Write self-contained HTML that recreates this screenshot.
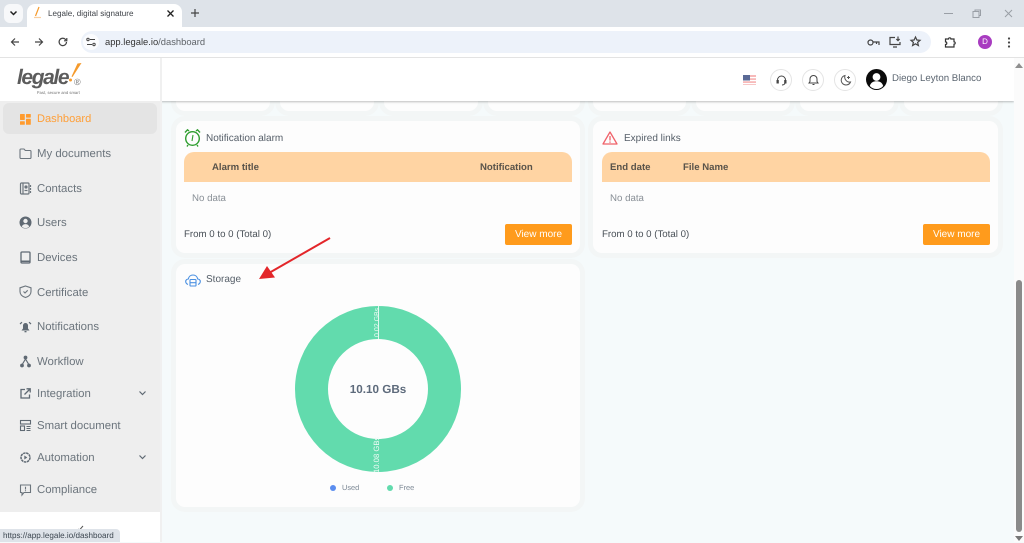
<!DOCTYPE html>
<html><head><meta charset="utf-8"><title>Legale, digital signature</title>
<style>
html,body{margin:0;padding:0;width:1024px;height:542px;overflow:hidden;background:#f5fafb;font-family:"Liberation Sans",sans-serif;text-rendering:geometricPrecision}
div,span{position:absolute;white-space:nowrap;box-sizing:border-box}
svg{position:absolute;overflow:visible}
.m{left:37px;font-size:11.4px;color:#6c757d;line-height:14px}
.i{left:19px;width:13px;height:13px}
.card{background:#fdfdfd;border-radius:9px;box-shadow:0 0 0 5px #f3f6f6}
.stub{top:90px;height:21px;background:#fdfdfd;border-radius:0 0 9px 9px;box-shadow:0 0 0 5px #f3f6f6}
.t{font-size:10px;color:#555e68;line-height:14px}
.th{top:152px;height:30px;background:#ffd4a3;border-radius:10px 10px 0 0}
.h{font-size:9.6px;font-weight:bold;color:#59534a;top:161px;line-height:13px}
.nd{top:192px;font-size:9.7px;color:#888f96;line-height:14px}
.fr{top:228px;font-size:9.7px;color:#495057;line-height:14px}
.btn{top:224px;width:67px;height:21px;background:#ff9b1c;border-radius:2px;color:#fff;font-size:10px;text-align:center;line-height:21px}
.hb{top:69px;width:22px;height:22px;border:1px solid #e4e4e4;border-radius:50%;background:#fff}
</style></head><body>

<!-- page -->
<div style="left:161px;top:57px;width:853px;height:485px;background:#f5fafb"></div>

<div class="stub" style="left:176px;width:94px"></div>
<div class="stub" style="left:280px;width:94px"></div>
<div class="stub" style="left:384px;width:94px"></div>
<div class="stub" style="left:488px;width:92px"></div>
<div class="stub" style="left:593px;width:93px"></div>
<div class="stub" style="left:696px;width:94px"></div>
<div class="stub" style="left:800px;width:94px"></div>
<div class="stub" style="left:904px;width:94px"></div>

<!-- header -->
<div style="left:161px;top:58px;width:853px;height:43px;background:#fff;box-shadow:0 1px 2px rgba(0,0,0,.25)"></div>
<svg style="left:743px;top:75px" width="13" height="10" viewBox="0 0 13 10"><rect width="13" height="10" fill="#f7b9b9"/><rect y="2" width="13" height="1.2" fill="#fff"/><rect y="5" width="13" height="1.2" fill="#fff"/><rect y="8" width="13" height="1.2" fill="#fff"/><rect width="7" height="5.5" fill="#5a6a96"/></svg>
<div class="hb" style="left:770px"></div>
<svg style="left:776px;top:75px" width="11" height="11" viewBox="0 0 11 11" fill="none" stroke="#444" stroke-width="1"><path d="M1.500 7V5a4 4 0 0 1 8 0v2"/><path d="M1 5.500h1.300v2.500H1zM8.700 5.500H10v2.500H8.700z" fill="#444"/><path d="M9 8.500Q8 10 6 10"/></svg>
<div class="hb" style="left:802px"></div>
<svg style="left:808px;top:74px" width="11" height="12" viewBox="0 0 11 12" fill="none" stroke="#444" stroke-width="1"><path d="M1 9h9L9 7.500V5a3.500 3.500 0 0 0-7 0v2.500z"/><path d="M4.500 10.500h2"/></svg>
<div class="hb" style="left:834px"></div>
<svg style="left:840px;top:74px" width="12" height="12" viewBox="0 0 12 12" fill="none" stroke="#555" stroke-width="1"><path d="M5 1.500a4.800 4.800 0 1 0 5.500 6.500A5 5 0 0 1 5 1.500z"/><path d="M8.500 2v3M7 3.500h3"/></svg>
<svg style="left:866px;top:69px" width="21" height="21" viewBox="0 0 21 21"><circle cx="10.500" cy="10.500" r="10.500" fill="#0b0b0b"/><circle cx="10.500" cy="8" r="3.900" fill="#fff"/><path d="M3.800 17c1-3.800 3.700-4.800 6.700-4.800s5.700 1 6.700 4.800a9 9 0 0 1-13.400 0z" fill="#fff"/></svg>
<div style="left:892px;top:72px;font-size:9.700px;color:#5b6570;line-height:14px">Diego Leyton Blanco</div>

<!-- sidebar -->
<div style="left:0;top:58px;width:160px;height:43px;background:#fff"></div>
<div style="left:0;top:101px;width:160px;height:411px;background:#eee"></div>
<div style="left:160px;top:58px;width:2px;height:484px;background:#f0f0f0"></div>
<div style="left:0;top:512px;width:160px;height:30px;background:#fff"></div>
<div style="left:3px;top:103px;width:154px;height:31px;background:#e4e4e4;border-radius:6px"></div>

<!-- logo -->
<div style="left:17px;top:66px;font-style:italic;font-weight:bold;font-size:21px;color:#5c5c5c;line-height:24px;letter-spacing:-1.4px">legale</div>
<svg style="left:68px;top:62px" width="14" height="22" viewBox="0 0 14 22"><path d="M13.500 1L4.500 15 3.500 14.500 9.500 1.500z" fill="#f59a2c"/><circle cx="2.500" cy="18" r="1.500" fill="#f59a2c"/></svg>
<div style="left:74px;top:77px;font-size:9px;color:#777;line-height:10px">®</div>
<div style="left:37px;top:90px;font-size:4.200px;color:#777;line-height:5px">Fast, secure and smart</div>

<!-- menu -->
<svg class="i" style="top:113px" viewBox="0 0 13 13" fill="#ff9b2e"><rect x="1" y="1" width="4.800" height="6" rx=".6"/><rect x="7" y="1" width="4.800" height="3.600" rx=".6"/><rect x="1" y="8.200" width="4.800" height="3.600" rx=".6"/><rect x="7" y="5.800" width="4.800" height="6" rx=".6"/></svg>
<div class="m" style="top:112px;color:#ff9f38;font-size:11.100px">Dashboard</div>

<svg class="i" style="top:147px" viewBox="0 0 13 13" fill="none" stroke="#6c757d" stroke-width="1.100"><path d="M1 3a1 1 0 0 1 1-1h3l1.300 1.500H11a1 1 0 0 1 1 1V10.500a1 1 0 0 1-1 1H2a1 1 0 0 1-1-1z"/></svg>
<div class="m" style="top:147px">My documents</div>

<svg class="i" style="top:182px" viewBox="0 0 13 13" fill="none" stroke="#6c757d" stroke-width="1.200"><rect x="1.500" y="1" width="8.500" height="11" rx="1"/><path d="M4 1v11M11.500 3v2M11.500 6v2M11.500 9v2"/><circle cx="7" cy="5" r="1" fill="#6c757d"/><path d="M5.500 8.500h3" /></svg>
<div class="m" style="top:182px">Contacts</div>

<svg class="i" style="top:216px" viewBox="0 0 13 13"><circle cx="6.500" cy="6.500" r="6" fill="#5f6973"/><circle cx="6.500" cy="5" r="2.200" fill="#eee"/><path d="M2.800 10.500c.8-1.800 2.200-2.400 3.700-2.400s2.900.6 3.700 2.400a5 5 0 0 1-7.400 0z" fill="#eee"/></svg>
<div class="m" style="top:216px">Users</div>

<svg class="i" style="top:251px" viewBox="0 0 13 13" fill="none" stroke="#5f6973" stroke-width="1.300"><rect x="2" y="1" width="9" height="11" rx="1"/><path d="M2 10.300h9" stroke-width="1.600"/></svg>
<div class="m" style="top:251px">Devices</div>

<svg class="i" style="top:285px" viewBox="0 0 13 13" fill="none" stroke="#6c757d" stroke-width="1.100"><path d="M6.500 1L12 2.800V6.500c0 3-2.300 5-5.500 6C3.300 11.500 1 9.500 1 6.500V2.800z"/><path d="M4.500 6.500l1.500 1.500 2.700-2.700"/></svg>
<div class="m" style="top:286px">Certificate</div>

<svg class="i" style="top:320px" viewBox="0 0 13 13" fill="#5f6973"><path d="M2.500 10.500L4 8.500V5.500a2.500 2.500 0 0 1 5 0v3l1.500 2z"/><rect x="5.500" y="11" width="2" height="1.300"/><path d="M1 4L3 2.200M12 4L10 2.200" stroke="#5f6973" stroke-width="1.200"/></svg>
<div class="m" style="top:320px">Notifications</div>

<svg class="i" style="top:355px" viewBox="0 0 13 13" fill="none" stroke="#5f6973" stroke-width="1.200"><circle cx="6.500" cy="2.500" r="1.300" fill="#5f6973"/><circle cx="3" cy="10.500" r="1.300" fill="#5f6973"/><circle cx="10" cy="10.500" r="1.300" fill="#5f6973"/><path d="M6.500 4L3.500 9M6.500 4l3 5"/></svg>
<div class="m" style="top:355px">Workflow</div>

<svg class="i" style="top:387px" viewBox="0 0 13 13" fill="none" stroke="#5f6973" stroke-width="1.300"><path d="M6 2.500H2v8.500h8.500V7.500"/><path d="M5.500 7.500L11 2M7.500 1.800H11.200V5.500"/></svg>
<div class="m" style="top:387px">Integration</div>
<svg style="left:138px;top:390px" width="9" height="6" viewBox="0 0 9 6" fill="none" stroke="#5f6973" stroke-width="1.200"><path d="M1.500 1.500l3 3 3-3"/></svg>

<svg class="i" style="top:419px" viewBox="0 0 13 13" fill="none" stroke="#5f6973" stroke-width="1.100"><rect x="1.500" y="1.500" width="10" height="3.500"/><rect x="1.500" y="7" width="4" height="4.500"/><path d="M7.500 7.500h4M7.500 9.500h4M7.500 11.500h4"/></svg>
<div class="m" style="top:419px">Smart document</div>

<svg class="i" style="top:451px" viewBox="0 0 13 13" fill="none" stroke="#5f6973" stroke-width="1.500"><circle cx="6.500" cy="6.500" r="4.500" stroke-dasharray="2.500 .6"/><path d="M5.300 4.500l3 2-3 2z" fill="#5f6973" stroke="none"/></svg>
<div class="m" style="top:451px">Automation</div>
<svg style="left:138px;top:454px" width="9" height="6" viewBox="0 0 9 6" fill="none" stroke="#5f6973" stroke-width="1.200"><path d="M1.500 1.500l3 3 3-3"/></svg>

<svg class="i" style="top:483px" viewBox="0 0 13 13" fill="none" stroke="#6c757d" stroke-width="1.100"><path d="M1.500 2h10v7.500H5L3 12V9.500H1.500z"/><path d="M6.500 3.800v2.700M6.500 7.200v1"/></svg>
<div class="m" style="top:483px">Compliance</div>

<!-- Notification card -->
<div class="card" style="left:176px;top:121px;width:404px;height:132px"></div>
<svg style="left:184px;top:128px" width="17" height="19" viewBox="0 0 17 19" fill="none" stroke="#2f9e2f" stroke-width="1.400"><circle cx="8.500" cy="10.500" r="6.800"/><path d="M9 7l-1 6" stroke-width="1.100"/><path d="M1 4.500L3.500 1.800 5 3M16 4.500L13.500 1.800 12 3"/><path d="M4 17l-1 1.500M13 17l1 1.500"/></svg>
<div class="t" style="left:206px;top:132px">Notification alarm</div>
<div class="th" style="left:184px;width:388px"></div>
<div class="h" style="left:212px;top:161px">Alarm title</div>
<div class="h" style="left:480px;top:161px">Notification</div>
<div class="nd" style="left:192px">No data</div>
<div class="fr" style="left:184px">From 0 to 0 (Total 0)</div>
<div class="btn" style="left:505px">View more</div>

<!-- Expired card -->
<div class="card" style="left:593px;top:121px;width:405px;height:132px"></div>
<svg style="left:602px;top:131px" width="16" height="14" viewBox="0 0 16 14" fill="none" stroke="#f0626a" stroke-width="1.300"><path d="M8 1L15 13H1z" stroke-linejoin="round"/><path d="M8 5v4.500M8 10.500v1.200"/></svg>
<div class="t" style="left:624px;top:132px">Expired links</div>
<div class="th" style="left:602px;width:388px"></div>
<div class="h" style="left:610px">End date</div>
<div class="h" style="left:683px">File Name</div>
<div class="nd" style="left:610px">No data</div>
<div class="fr" style="left:602px">From 0 to 0 (Total 0)</div>
<div class="btn" style="left:923px">View more</div>

<!-- Storage card -->
<div class="card" style="left:176px;top:264px;width:404px;height:243px"></div>
<svg style="left:185px;top:273px" width="16" height="14" viewBox="0 0 16 14" fill="none" stroke="#4a90e2" stroke-width="1.100"><path d="M3 11.500C1.500 10.800.700 9.800.700 8.500.700 7 2 6 3.300 6 3.800 3.500 5.800 2 8 2s4.200 1.500 4.700 4C14 6 15.300 7 15.300 8.500c0 1.300-.8 2.300-2.300 3"/><rect x="5" y="6.500" width="6" height="6.500" rx=".8"/><path d="M5 9.700h6"/></svg>
<div class="t" style="left:206px;top:273px">Storage</div>

<svg style="left:295px;top:306px" width="166" height="166" viewBox="0 0 166 166"><circle cx="83" cy="83" r="66.500" fill="none" stroke="#62dbad" stroke-width="33"/><path d="M83.500 0v33" stroke="#fff" stroke-width=".8"/></svg>
<div style="left:378px;top:306px;width:0;height:0"><span style="left:-14px;top:13px;width:28px;text-align:center;transform:rotate(-90deg);font-size:7px;color:#ecfbf5;line-height:8px">0.02 GBs</span></div>
<div style="left:377px;top:455px;width:0;height:0"><span style="left:-18px;top:-4px;width:36px;text-align:center;transform:rotate(-90deg);font-size:7.700px;color:#f2fcf8;line-height:8px">10.08 GBs</span></div>
<div style="left:328px;top:382px;width:100px;text-align:center;font-size:11.700px;font-weight:bold;color:#5e6b7c;line-height:16px">10.10 GBs</div>
<div style="left:330px;top:485px;width:6px;height:6px;border-radius:50%;background:#5b8def"></div>
<div style="left:342px;top:483px;font-size:7.400px;color:#7b8794;line-height:10px">Used</div>
<div style="left:387px;top:485px;width:6px;height:6px;border-radius:50%;background:#62dbad"></div>
<div style="left:399px;top:483px;font-size:7.400px;color:#7b8794;line-height:10px">Free</div>

<!-- Arrow -->
<svg style="left:255px;top:235px" width="80" height="50" viewBox="0 0 80 50"><path d="M75 3L14 38" stroke="#e3262a" stroke-width="2"/><path d="M4 44L20 42.500 12 31z" fill="#e3262a"/></svg>

<!-- page scrollbar -->
<div style="left:1014px;top:58px;width:10px;height:484px;background:#fbfbfb"></div>
<svg style="left:1015px;top:62px" width="8" height="6"><path d="M4 1L8 6H0z" fill="#8f8f8f"/></svg>
<svg style="left:1015px;top:536px" width="8" height="5"><path d="M0 0h8L4 5z" fill="#777"/></svg>
<div style="left:1016px;top:280px;width:6px;height:252px;background:#8a8a8a;border-radius:3px"></div>

<!-- browser chrome -->
<div style="left:0;top:0;width:1024px;height:27px;background:#dee3e9"></div>
<div style="left:0;top:27px;width:1024px;height:31px;background:#fff;border-bottom:1px solid #e3e3e3"></div>
<div style="left:4px;top:4px;width:19px;height:19px;background:#f7f8fa;border-radius:6px"></div>
<svg style="left:9px;top:10px" width="9" height="7" viewBox="0 0 9 7" fill="none" stroke="#222" stroke-width="1.500"><path d="M1.500 1.500l3 3 3-3"/></svg>
<div style="left:27px;top:4px;width:155px;height:23px;background:#fff;border-radius:8px 8px 0 0"></div>
<svg style="left:33px;top:6px" width="10" height="13" viewBox="0 0 10 13" fill="none" stroke="#f59a2c" stroke-width="1.200"><path d="M6 1L2.500 10"/><path d="M1 11.500h7" stroke="#f9cfa0"/></svg>
<div style="left:48px;top:7px;font-size:8.100px;color:#40444a;line-height:13px">Legale, digital signature</div>
<svg style="left:166px;top:9px" width="9" height="9" viewBox="0 0 9 9" stroke="#222" stroke-width="1.300"><path d="M1.500 1.500l6 6M7.500 1.500l-6 6"/></svg>
<svg style="left:190px;top:8px" width="10" height="10" viewBox="0 0 10 10" stroke="#444" stroke-width="1.200"><path d="M5 1v8M1 5h8"/></svg>
<svg style="left:942px;top:9px" width="70" height="10" viewBox="0 0 70 10" fill="none" stroke="#9a9fa6" stroke-width="1"><path d="M2 4.500h9"/><rect x="31" y="2.500" width="6" height="6"/><path d="M33 2.500V1h5.500v5.500H37"/><path d="M63 1l7 7M70 1l-7 7"/></svg>

<svg style="left:10px;top:37px" width="10" height="10" viewBox="0 0 10 10" fill="none" stroke="#444" stroke-width="1.200"><path d="M9 5H1.500M5 1.500L1.500 5 5 8.500"/></svg>
<svg style="left:34px;top:37px" width="10" height="10" viewBox="0 0 10 10" fill="none" stroke="#444" stroke-width="1.200"><path d="M1 5h7.500M5 1.500L8.500 5 5 8.500"/></svg>
<svg style="left:58px;top:37px" width="10" height="10" viewBox="0 0 10 10" fill="none" stroke="#444" stroke-width="1.200"><path d="M8.500 5A3.700 3.700 0 1 1 7.400 2.300L8.700 3.500"/><path d="M8.800 1v2.800H6" /></svg>

<div style="left:81px;top:31px;width:850px;height:22px;background:#edf2fa;border-radius:11px"></div>
<div style="left:83px;top:34px;width:16px;height:16px;background:#fbfcfe;border-radius:50%"></div>
<svg style="left:86px;top:37px" width="10" height="10" viewBox="0 0 10 10" fill="none" stroke="#444" stroke-width="1"><path d="M4 2.500h5M1 7.500h5"/><circle cx="2" cy="2.500" r="1.200"/><circle cx="8" cy="7.500" r="1.200"/></svg>
<div style="left:105px;top:35px;font-size:9.400px;color:#333;line-height:13px">app.legale.io<span style="position:static;color:#5f6368">/dashboard</span></div>

<svg style="left:867px;top:38px" width="13" height="9" viewBox="0 0 13 9" fill="none" stroke="#444" stroke-width="1.200"><circle cx="3.500" cy="4.500" r="2.500"/><path d="M6 4h6v3M9.500 4v2"/></svg>
<svg style="left:889px;top:36px" width="12" height="12" viewBox="0 0 12 12" fill="none" stroke="#444" stroke-width="1.200"><path d="M6 1.500H1v7h10V6"/><path d="M4 11h4M9 .5v4M7.300 3L9 4.700 10.700 3"/></svg>
<svg style="left:910px;top:36px" width="11" height="11" viewBox="0 0 11 11" fill="none" stroke="#444" stroke-width="1.200"><path d="M5.500 1l1.400 3 3.100.3-2.400 2.100.8 3.100-2.900-1.700-2.900 1.700.8-3.100L1 4.300 4.100 4z"/></svg>
<svg style="left:944px;top:36px" width="12" height="12" viewBox="0 0 12 12" fill="none" stroke="#333" stroke-width="1.200"><path d="M1.500 3H4.500a1.200 1.200 0 0 1 2.400 0H10v2.800a1.200 1.200 0 0 1 0 2.400V11H1.500V8.500a1.200 1.200 0 0 0 0-2.600z"/></svg>
<div style="left:978px;top:35px;width:14px;height:14px;background:#a83cc0;border-radius:50%;color:#fff;font-size:8px;line-height:14px;text-align:center">D</div>
<svg style="left:1007px;top:37px" width="4" height="11" viewBox="0 0 4 11" fill="#444"><circle cx="2" cy="1.500" r="1.100"/><circle cx="2" cy="5.500" r="1.100"/><circle cx="2" cy="9.500" r="1.100"/></svg>

<!-- status bubble -->
<svg style="left:76px;top:525px" width="10" height="6" viewBox="0 0 10 6" fill="none" stroke="#555" stroke-width="1"><path d="M2 4l1.500 1L7 1"/></svg>
<div style="left:0;top:529px;width:120px;height:13px;background:#dee3e9;border-radius:0 4px 0 0;font-size:8.100px;color:#3c4650;line-height:14px;padding-left:3px">https://app.legale.io/dashboard</div>
</body></html>
